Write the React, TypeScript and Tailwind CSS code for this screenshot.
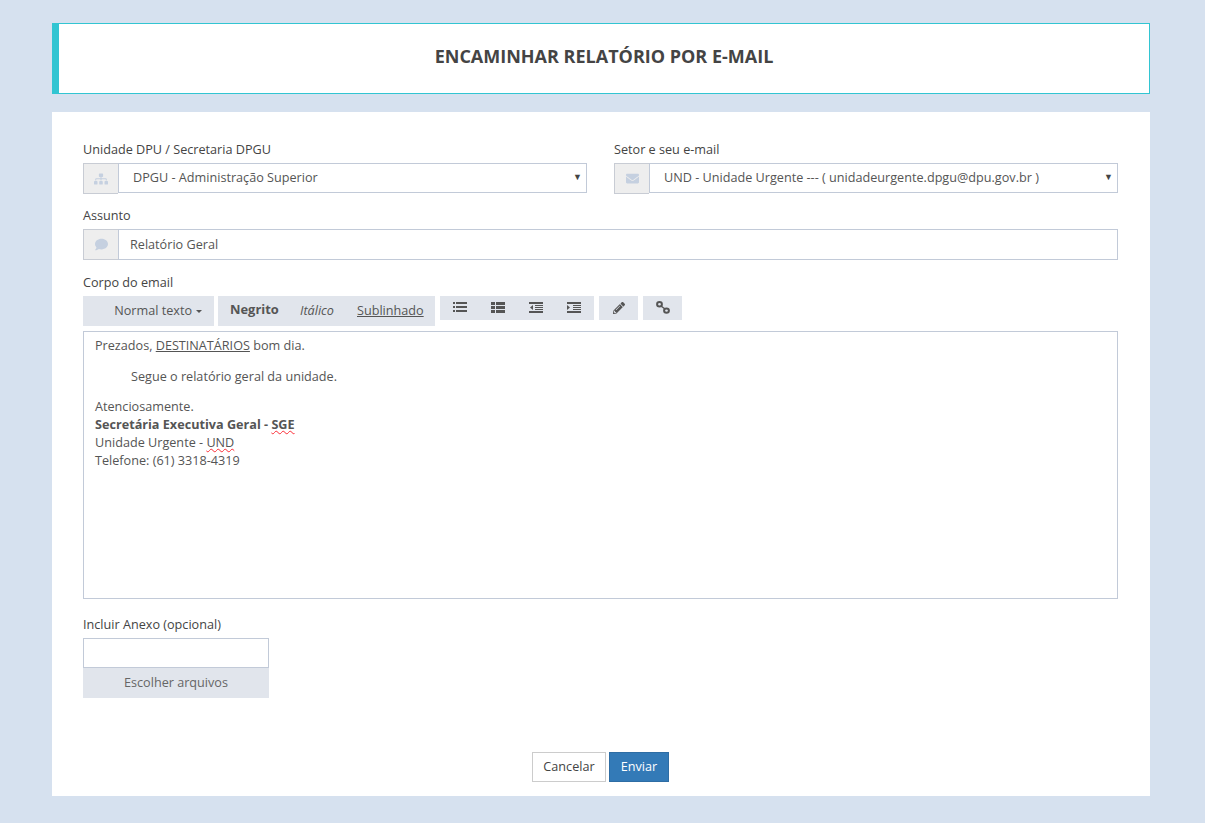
import { FaEnvelope, FaComment, FaSitemap, FaPencilAlt } from 'react-icons/fa'

const inputBorder = 'border border-[#c2cad8]'

function Addon({ children, size = 'text-[13px]', height = 'h-[31px]' }: { children: React.ReactNode; size?: string; height?: string }) {
  return (
    <span className={`flex w-[35px] shrink-0 items-center justify-center border border-r-0 border-[#c8ccd4] bg-[#eeeeee] text-[#c5d0e0] ${height} ${size}`}>
      {children}
    </span>
  )
}

function FakeSelect({ icon, value, size }: { icon: React.ReactNode; value: string; size?: string }) {
  return (
    <div className="flex h-[30px] items-start">
      <Addon size={size}>{icon}</Addon>
      <div className={`flex h-[30px] flex-1 items-center justify-between pb-[2px] pl-[14px] pr-[4px] ${inputBorder}`}>
        <span>{value}</span>
        <span className="text-[9px] text-[#444]">▼</span>
      </div>
    </div>
  )
}

function ListIcon() {
  return (
    <svg width="14" height="10" viewBox="0 0 14 10" fill="currentColor">
      <path d="M0 0h2v2H0zM3 0h11v2H3zM0 4h2v2H0zM3 4h11v2H3zM0 8h2v2H0zM3 8h11v2H3z" />
    </svg>
  )
}

function ThListIcon() {
  return (
    <svg width="14" height="11" viewBox="0 0 14 11" fill="currentColor">
      <path d="M0 0h4v3H0zM5 0h9v3H5zM0 4h4v3H0zM5 4h9v3H5zM0 8h4v3H0zM5 8h9v3H5z" />
    </svg>
  )
}

function IndentIcon({ flip }: { flip?: boolean }) {
  return (
    <svg width="14" height="11" viewBox="0 0 14 11" fill="currentColor">
      <path d="M0 0h14v2H0zM0 9h14v2H0zM6 3h8v1H6zM6 5h8v1H6zM6 7h8v1H6z" />
      {flip ? <path d="M0 3l3 2.5L0 8z" /> : <path d="M4 3L1 5.5 4 8z" />}
    </svg>
  )
}

function ChainIcon() {
  return (
    <svg width="14" height="13" viewBox="0 0 14 13" fill="none" stroke="currentColor" strokeWidth="2">
      <ellipse cx="3.5" cy="3.2" rx="2.4" ry="2.2" />
      <ellipse cx="10.5" cy="9.6" rx="2.4" ry="2.2" />
      <path d="M5 5l4 3" strokeWidth="1.5" />
    </svg>
  )
}

export default function App() {
  return (
    <div className="min-h-[823px] bg-[#d6e1ef] pl-[52px] pr-[55px] pt-[23px] font-['Open_Sans',sans-serif] text-[12.65px] text-[#555555]">
      <header className="flex h-[71px] items-center justify-center border border-l-[7px] border-[#32c5d2] bg-white pb-[5px]">
        <h1 className="text-[18px] font-bold text-[#444444]">ENCAMINHAR RELATÓRIO POR E-MAIL</h1>
      </header>

      <main className="mt-[18px] h-[684px] bg-white pl-[31px] pr-[32px] pt-[28px]">
        <div className="flex gap-[27px]">
          <div className="w-[504px]">
            <label className="mb-[5px] block h-[18px] leading-[18px] text-[#444]">Unidade DPU / Secretaria DPGU</label>
            <FakeSelect icon={<FaSitemap />} size="text-[14px]" value="DPGU - Administração Superior" />
          </div>
          <div className="flex-1">
            <label className="mb-[5px] block h-[18px] leading-[18px] text-[#444]">Setor e seu e-mail</label>
            <FakeSelect icon={<FaEnvelope />} value="UND - Unidade Urgente --- ( unidadeurgente.dpgu@dpu.gov.br )" />
          </div>
        </div>

        <label className="mb-[5px] mt-[13px] block h-[18px] leading-[18px] text-[#444]">Assunto</label>
        <div className="flex h-[31px]">
          <Addon><FaComment /></Addon>
          <div className={`flex flex-1 items-center pl-[11px] ${inputBorder}`}>Relatório Geral</div>
        </div>

        <label className="mb-[5px] mt-[13px] block h-[18px] leading-[18px] text-[#444]">Corpo do email</label>
        <div className="flex items-start gap-[5px]">
          <div className="-mr-px flex h-[30px] w-[131px] items-center justify-end bg-[#e1e5ec] pb-[2px] pr-[12px]">
            Normal texto
            <span className="ml-[4px] mt-[2px] border-x-[3px] border-t-[3px] border-x-transparent border-t-[#555]" />
          </div>
          <div className="flex h-[30px] w-[217px] items-center bg-[#e1e5ec] pb-[2px] pl-[12px]">
            <b className="w-[48px] text-[12.9px] text-[#555]">Negrito</b>
            <i className="ml-[22px] w-[34px]">Itálico</i>
            <u className="ml-[23px]">Sublinhado</u>
          </div>
          <div className="flex h-[24px] w-[154px] items-center justify-between bg-[#e1e5ec] pb-[2px] pl-[13px] pr-[13px]">
            <ListIcon />
            <ThListIcon />
            <IndentIcon />
            <IndentIcon flip />
          </div>
          <div className="flex h-[24px] w-[39px] items-center justify-center bg-[#e1e5ec] text-[12px]"><FaPencilAlt /></div>
          <div className="flex h-[24px] w-[39px] items-center justify-center bg-[#e1e5ec] pb-[2px]"><ChainIcon /></div>
        </div>

        <div className={`mt-[5px] h-[268px] px-[11px] pt-[4px] leading-[18px] ${inputBorder}`}>
          <p>Prezados, <u>DESTINATÁRIOS</u> bom dia.</p>
          <p className="mt-[13px] pl-[36px]">Segue o relatório geral da unidade.</p>
          <p className="mt-[12px]">Atenciosamente.</p>
          <p><b>Secretária Executiva Geral - <span className="underline decoration-red-500 decoration-wavy decoration-1">SGE</span></b></p>
          <p>Unidade Urgente - <span className="underline decoration-red-500 decoration-wavy decoration-1">UND</span></p>
          <p>Telefone: (61) 3318-4319</p>
        </div>

        <label className="mb-[5px] mt-[16px] block h-[18px] leading-[18px] text-[#444]">Incluir Anexo (opcional)</label>
        <div className={`h-[30px] w-[186px] ${inputBorder}`} />
        <div className="flex h-[30px] w-[186px] items-center justify-center bg-[#e1e5ec] pb-[2px] text-[#666]">Escolher arquivos</div>

        <div className="mt-[54px] flex justify-center gap-[3px]">
          <button className="h-[30px] w-[74px] border border-[#cccccc] bg-white pb-[2px] text-[#444]">Cancelar</button>
          <button className="h-[30px] w-[60px] border border-[#2e6da4] bg-[#337ab7] pb-[2px] text-white">Enviar</button>
        </div>
      </main>
    </div>
  )
}
